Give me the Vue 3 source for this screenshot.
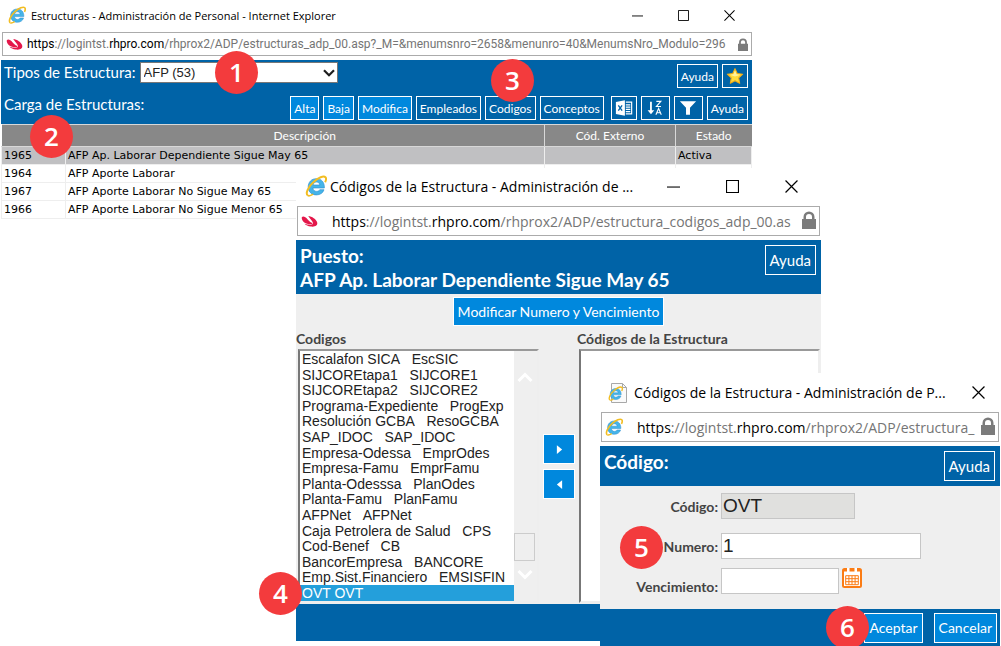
<script setup>
import { ref } from 'vue'

const tipo = ref('AFP (53)')
const codigo = ref('OVT')
const numero = ref('1')
const vencimiento = ref('')
const elegido = ref('OVT OVT')

const filas = [
  { id: '1965', desc: 'AFP Ap. Laborar Dependiente Sigue May 65', estado: 'Activa', activa: true },
  { id: '1964', desc: 'AFP Aporte Laborar', estado: '' },
  { id: '1967', desc: 'AFP Aporte Laborar No Sigue May 65', estado: '' },
  { id: '1966', desc: 'AFP Aporte Laborar No Sigue Menor 65', estado: '' },
]

const g = '\u00a0\u00a0\u00a0'
const codigos = [
  `Escalafon SICA${g}EscSIC`,
  `SIJCOREtapa1${g}SIJCORE1`,
  `SIJCOREtapa2${g}SIJCORE2`,
  `Programa-Expediente${g}ProgExp`,
  `Resolución GCBA${g}ResoGCBA`,
  `SAP_IDOC${g}SAP_IDOC`,
  `Empresa-Odessa${g}EmprOdes`,
  `Empresa-Famu${g}EmprFamu`,
  `Planta-Odesssa${g}PlanOdes`,
  `Planta-Famu${g}PlanFamu`,
  `AFPNet${g}AFPNet`,
  `Caja Petrolera de Salud${g}CPS`,
  `Cod-Benef${g}CB`,
  `BancorEmpresa${g}BANCORE`,
  `Emp.Sist.Financiero${g}EMSISFIN`,
  'OVT OVT',
]
</script>

<template>
  <svg class="defs" aria-hidden="true">
    <symbol id="ie" viewBox="0 0 20 20">
      <path d="M17.6 11.800H7.200c.1 2 1.500 3.100 3.300 3.100 1.400 0 2.300-.5 2.900-1.500h3.900c-.9 2.900-3.500 4.700-6.900 4.700-4.400 0-7.500-2.900-7.500-7.300S6 3.300 10.400 3.300c4.500 0 7.400 3.200 7.200 8.500zM7.300 9.100h6.200c-.2-1.700-1.400-2.700-3.100-2.700-1.600 0-2.800 1-3.100 2.700z" fill="#45b4e8" stroke="#2d8fd0" stroke-width=".6" />
      <path d="M2.600 18.600c-2.500-1.600.2-8 5.200-12.300C12.200 2.300 17 .4 18.600 2c.9.900.6 2.700-.3 4.600" fill="none" stroke="#f2bd22" stroke-width="1.800" />
      <path d="M2.600 18.700c1.200.6 3-.1 4.800-1.300" fill="none" stroke="#f2bd22" stroke-width="1.500" />
    </symbol>
    <symbol id="rh" viewBox="0 0 18 14">
      <path d="M.6 2.600C1.800.8 4.600 1.800 6.800 4.600c1.300 1.700 2.800 3 5 3.900.8.900-.3 1.500-1.600 1.500C5 10 .6 6.800.6 2.600z" fill="#e4174a" />
      <path d="M7.600 1.200c4 .4 8.800 3.500 9.700 7 .8 3.400-2.700 5-6.800 4.300-3-.5-5.600-1.700-6.900-3.200 3.600 1.400 8 1.700 9 .1C13.300 7.500 9.600 4.300 7.600 1.200z" fill="#e4174a" />
    </symbol>
    <symbol id="lock" viewBox="0 0 14 18">
      <path d="M0 8h1.500V6a5.500 5.500 0 0 1 11 0v2H14v10H0zM4 8h6V6a3 3 0 0 0-6 0z" fill="#7b7b7b" />
    </symbol>
    <symbol id="min" viewBox="0 0 12 12"><path d="M0 6.500h12" stroke="#000" /></symbol>
    <symbol id="max" viewBox="0 0 12 12"><path d="M.5.5h11v11H.5z" fill="none" stroke="#000" /></symbol>
    <symbol id="close" viewBox="0 0 12 12"><path d="M.5.5l11 11M11.500.5l-11 11" stroke="#000" stroke-width="1.100" /></symbol>
  </svg>

  <main class="desk">
    <section class="win main">
      <header class="title">
        <svg class="i17"><use href="#ie" /></svg>
        <h1>Estructuras - Administración de Personal - Internet Explorer</h1>
        <button class="wb" aria-label="Minimizar"><svg><use href="#min" /></svg></button>
        <button class="wb" aria-label="Maximizar"><svg><use href="#max" /></svg></button>
        <button class="wb" aria-label="Cerrar"><svg><use href="#close" /></svg></button>
      </header>
      <div class="addr">
        <svg class="rh"><use href="#rh" /></svg>
        <span class="url"><b>https</b>://logintst.<b>rhpro.com</b>/rhprox2/ADP/estructuras_adp_00.asp?_M=&amp;menumsnro=2658&amp;menunro=40&amp;MenumsNro_Modulo=296</span>
        <svg class="lock"><use href="#lock" /></svg>
      </div>
      <div class="blue bars">
        <div class="row">
          <label for="tipo">Tipos de Estructura:</label>
          <span class="combo">
            <select id="tipo" v-model="tipo"><option>AFP (53)</option></select>
            <svg class="chev" viewBox="0 0 12 8"><path d="M1 1.200l5 5 5-5" fill="none" stroke="#1e1e1e" stroke-width="2.200" /></svg>
          </span>
          <span class="fill"></span>
          <button class="btn">Ayuda</button>
          <button class="btn ico" aria-label="Favorito">
            <svg viewBox="0 0 20 20"><path d="M10 1.800l2.500 5.500 6 .7-4.400 4.100 1.100 6-5.200-2.900-5.200 2.900 1.100-6L1.500 8l6-.7z" fill="#ffdc3c" stroke="#f3ac16" stroke-width="1.200" stroke-linejoin="round" /><path d="M10 4l1.700 4 4.300.6-6 2-5.500-2L8.300 8z" fill="#fff3a0" /></svg>
          </button>
        </div>
        <div class="row second">
          <span>Carga de Estructuras:</span>
          <span class="fill"></span>
          <button class="btn light">Alta</button>
          <button class="btn light">Baja</button>
          <button class="btn light">Modifica</button>
          <button class="btn">Empleados</button>
          <button class="btn">Codigos</button>
          <button class="btn last">Conceptos</button>
          <button class="btn ico" aria-label="Excel">
            <svg viewBox="0 0 20 20"><path d="M1 3.200l10-1.700v17L1 16.800z" fill="#fff" /><path d="M3.700 7l4.200 6M7.900 7l-4.200 6" stroke="#0063a7" stroke-width="1.500" /><path d="M12 3.500h6.500v13H12" fill="none" stroke="#fff" stroke-width="1.300" /><path d="M12 6.500h5M12 9h5M12 11.500h5M12 14h5" stroke="#fff" stroke-width="1.300" /></svg>
          </button>
          <button class="btn ico wide" aria-label="Ordenar">
            <svg viewBox="0 0 20 20"><path d="M5.500 3v12" stroke="#fff" stroke-width="2" /><path d="M1.800 12.500h7.400L5.500 17z" fill="#fff" /><path d="M11.500 2.600h5l-5 5.800h5.200M11 17.500l3-7 3 7M12 15.300h4" fill="none" stroke="#fff" stroke-width="1.200" /></svg>
          </button>
          <button class="btn ico wide" aria-label="Filtrar">
            <svg viewBox="0 0 20 20"><path d="M1 2.500h18l-6.800 7.300V17.500H7.800V9.800z" fill="#fff" /></svg>
          </button>
          <button class="btn">Ayuda</button>
        </div>
      </div>
      <table class="grid">
        <colgroup><col class="c-id" /><col /><col class="c-ext" /><col class="c-est" /></colgroup>
        <thead>
          <tr><th class="nob"></th><th class="nob">Descripción</th><th>Cód. Externo</th><th>Estado</th></tr>
        </thead>
        <tbody>
          <tr v-for="f in filas" :key="f.id" :class="{ on: f.activa }">
            <td>{{ f.id }}</td><td>{{ f.desc }}</td><td></td><td>{{ f.estado }}</td>
          </tr>
        </tbody>
      </table>
      <span class="badge b1">1</span>
      <span class="badge b2">2</span>
      <span class="badge b3">3</span>
    </section>

    <section class="win codes big">
      <header class="title">
        <svg class="i21"><use href="#ie" /></svg>
        <h2>Códigos de la Estructura - Administración de ...</h2>
        <button class="wb" aria-label="Minimizar"><svg><use href="#min" /></svg></button>
        <button class="wb" aria-label="Maximizar"><svg><use href="#max" /></svg></button>
        <button class="wb" aria-label="Cerrar"><svg><use href="#close" /></svg></button>
      </header>
      <div class="addr">
        <svg class="rh"><use href="#rh" /></svg>
        <span class="url"><b>https</b>://logintst.<b>rhpro.com</b>/rhprox2/ADP/estructura_codigos_adp_00.as</span>
        <svg class="lock"><use href="#lock" /></svg>
      </div>
      <div class="blue head">
        <h3>Puesto:<br />AFP Ap. Laborar Dependiente Sigue May 65</h3>
        <button class="btn">Ayuda</button>
      </div>
      <div class="body">
        <button class="modify">Modificar Numero y Vencimiento</button>
        <div class="lists">
          <div class="col left">
            <label for="lista">Codigos</label>
            <div class="box">
              <select id="lista" v-model="elegido" size="16">
                <option v-for="c in codigos" :key="c" :value="c">{{ c }}</option>
              </select>
              <div class="scroll" aria-hidden="true">
                <svg viewBox="0 0 16 12"><path d="M1.500 10L8 3.500l6.500 6.500" /></svg>
                <span class="thumb"></span>
                <svg viewBox="0 0 16 12"><path d="M1.500 2L8 8.500 14.500 2" /></svg>
              </div>
            </div>
          </div>
          <div class="moves">
            <button aria-label="Agregar"><svg viewBox="0 0 8 12"><path d="M1 1l6 5-6 5z" /></svg></button>
            <button aria-label="Quitar"><svg viewBox="0 0 8 12"><path d="M7 1L1 6l6 5z" /></svg></button>
          </div>
          <div class="col right">
            <label for="destino">Códigos de la Estructura</label>
            <div class="box"><select id="destino" size="16"></select></div>
          </div>
        </div>
      </div>
      <div class="blue foot"></div>
      <span class="badge b4">4</span>
    </section>

    <section class="win code big">
      <header class="title">
        <svg class="page" viewBox="0 0 20 20"><path d="M3.500.5h11l4 4v15h-15z" fill="#fafafa" stroke="#a8a8a8" /><path d="M14.500.5v4h4" fill="none" stroke="#a8a8a8" /><use href="#ie" x="0" y="3" width="15" height="15" /></svg>
        <h2>Códigos de la Estructura - Administración de P...</h2>
        <button class="wb" aria-label="Cerrar"><svg><use href="#close" /></svg></button>
      </header>
      <div class="addr">
        <svg class="i17"><use href="#ie" /></svg>
        <span class="url"><b>https</b>://logintst.<b>rhpro.com</b>/rhprox2/ADP/estructura_</span>
        <svg class="lock"><use href="#lock" /></svg>
      </div>
      <div class="blue head">
        <h3>Código:</h3>
        <button class="btn">Ayuda</button>
      </div>
      <form class="form" @submit.prevent>
        <label for="cod">Código:</label>
        <input id="cod" v-model="codigo" class="w-cod" readonly />
        <label for="num">Numero:</label>
        <input id="num" v-model="numero" class="w-num" />
        <label for="ven">Vencimiento:</label>
        <span class="date">
          <input id="ven" v-model="vencimiento" class="w-ven" />
          <button type="button" class="cal" aria-label="Calendario">
            <svg viewBox="0 0 20 20"><rect width="20" height="20" rx="2.500" fill="#fb7c14" /><path d="M2 3.500h16V18H2z" fill="#fff" /><path d="M5 0h2.500v5H5zM12.500 0H15v5h-2.500z" fill="#fff" /><path d="M3.700 7.700h12.600v9H3.700zM3.700 10.700h12.600M3.700 13.700h12.600M6.900 7.700v9M10 7.700v9M13.100 7.700v9" fill="none" stroke="#fb7c14" /></svg>
          </button>
        </span>
      </form>
      <div class="blue foot">
        <button class="btn light">Aceptar</button>
        <button class="btn light">Cancelar</button>
      </div>
      <span class="badge b5">5</span>
      <span class="badge b6">6</span>
    </section>
  </main>
</template>

<style>
body { margin: 0; background: #fff; }
</style>

<style scoped>
.defs { position: absolute; width: 0; height: 0; }
.desk {
  position: relative;
  height: 100vh;
  overflow: hidden;
  background: #fff;
  font-family: Lato, "Open Sans", sans-serif;
  font-size: 15px;
}
.desk * { box-sizing: border-box; }
h1, h2, h3 { margin: 0; }
button { font-family: inherit; cursor: pointer; padding: 0; }
svg { display: block; flex: none; }

.win { position: absolute; background: #fff; }
.main { left: 1px; right: 249px; top: 0; }
.codes { left: 296px; right: 180px; top: 168px; }
.code { left: 600px; right: 1px; top: 373px; }

.title { display: flex; align-items: center; height: 32px; padding: 0 0 2px 7px; }
.title h1, .title h2 {
  flex: 1;
  min-width: 0;
  overflow: hidden;
  white-space: nowrap;
  font-family: "Open Sans", sans-serif;
  font-weight: 400;
  color: #000;
}
.title h1 { font-size: 11px; margin-left: 5px; }
.title h2 { font-size: 14px; margin-left: 3px; }
.i17 { width: 18px; height: 18px; }
.i21 { width: 22px; height: 22px; }
.wb { width: 46px; height: 30px; border: 0; background: none; display: grid; place-items: center; flex: none; }
.wb svg { width: 11px; height: 11px; }

.addr {
  display: flex;
  align-items: center;
  height: 24px;
  margin: 0 0 4px 1px;
  padding: 0 3px;
  border: 1px solid #ababab;
  font-family: Roboto, "Open Sans", sans-serif;
  font-size: 12px;
  color: #757575;
}
.addr b { font-weight: 400; color: #000; }
.url { flex: 1; min-width: 0; overflow: hidden; white-space: nowrap; margin: 0 6px 0 4px; }
.rh { width: 17px; height: 13px; }
.lock { width: 10px; height: 13px; }

.blue { background: #0063a7; color: #fff; }
.bars { height: 64px; padding: 0 4px 0 3px; }
.row { display: flex; align-items: center; gap: 4px; height: 32px; }
.row label, .second > span, .combo { padding-bottom: 8px; }
.fill { flex: 1; }
.combo { position: relative; width: 198px; }
.combo select {
  appearance: none;
  display: block;
  width: 100%;
  height: 21px;
  padding: 0 3px;
  border: 1px solid #777;
  border-radius: 0;
  background: #fff;
  color: #222;
  font: 13px "Liberation Sans", sans-serif;
}
.chev { position: absolute; right: 3px; top: 7px; width: 12px; height: 8px; pointer-events: none; }
.btn {
  height: 24px;
  padding: 0 3px;
  border: 1px solid #fff;
  background: #0063a7;
  color: #fff;
  font-size: 12px;
  white-space: nowrap;
}
.light { background: #0088dd; }
.ico { width: 26px; display: grid; place-items: center; padding: 0; }
.ico svg { width: 18px; height: 18px; }
.wide { width: 29px; }
.last { margin-right: 3px; }

.grid { width: 100%; border-collapse: collapse; table-layout: fixed; font-family: "DejaVu Sans", sans-serif; font-size: 11px; color: #000; }
.c-id { width: 64px; }
.c-ext { width: 131px; }
.c-est { width: 76px; }
.grid th { height: 22px; padding: 0; background: #888; color: #fff; font: 12px Lato, sans-serif; border: 1px solid #d8d8d8; border-width: 1px 0 1px 1px; }
.grid .nob { border-left: 0; }
.grid td { height: 18px; padding: 0 2px; border: 1px solid #eee; border-top: 0; white-space: nowrap; line-height: 17px; }
.grid .on td { background: #c0c0c2; }

.badge {
  position: absolute;
  width: 43px;
  height: 43px;
  border-radius: 50%;
  background: #f33b3d;
  color: #fff;
  font: 600 26px/42px "Open Sans", sans-serif;
  text-align: center;
}
.b1 { left: 214px; top: 51px; }
.b2 { left: 29px; top: 115px; }
.b3 { right: 218px; top: 59px; }
.b4 { left: -37px; top: 404px; }
.b5 { left: 20px; top: 153px; }
.b6 { right: 131px; top: 233px; }

.big .title { height: 38px; padding-left: 9px; }
.big .wb { width: 59px; }
.big .wb svg { width: 13px; height: 13px; }
.big .addr { height: 30px; margin: 0 1px 4px; font-family: "Open Sans", sans-serif; font-size: 14px; }
.big .url { margin: 0 4px 0 14px; }
.big .lock { width: 14px; height: 18px; margin-bottom: 2px; }
.big .btn { height: 30px; padding: 0 4px; font-size: 15px; }
.head { display: flex; justify-content: space-between; align-items: flex-start; padding: 5px 5px 1px 4px; }
.head h3 { font-size: 19px; line-height: 24px; font-weight: 700; }
.codes .head { height: 54px; }
.big .head h3 { margin-top: -1px; }

.body { background: #efefef; padding: 3px 0 1px; }
.modify { display: block; height: 29px; margin: 0 auto; padding: 0 4px; border: 1px solid #fff; background: #0088dd; color: #fff; font-size: 14px; }
.lists { display: flex; margin-top: 3px; }
.col label { display: block; font-size: 14px; line-height: 20px; font-weight: 700; color: #444; }
.left { width: 243px; }
.left .box { margin-left: 2px; }
.right { flex: 1; min-width: 0; margin-right: 1px; }
.right label { margin-left: -2px; }
.box { display: flex; height: 254px; background: #fff; border: 2px solid #999; border-left-color: #777; border-right-color: #eee; border-bottom-color: #eee; }
.box select { flex: 1; min-width: 0; height: 100%; appearance: none; border: 0; outline: 0; padding: 0; overflow: hidden; background: #fff; border-radius: 0; font: 14px "Liberation Sans", sans-serif; color: #222; }
.box option { height: 16px; min-height: 0; line-height: 15px; padding: 0 2px; }
.box option:nth-child(5n+2), .box option:nth-child(5n+4) { height: 15px; }
.box option:checked { background: linear-gradient(#249fdb, #249fdb); -webkit-text-fill-color: #fff; }
.scroll { width: 23px; background: #efefef; display: flex; flex-direction: column; padding: 20px 2px 20px 0; }
.scroll svg { width: 16px; height: 12px; margin: 0 auto; fill: none; stroke: #fff; stroke-width: 3; }
.thumb { height: 28px; margin: auto 0 8px; border: 1px solid #ccc; }
.moves { width: 40px; padding-top: 105px; display: flex; flex-direction: column; align-items: center; gap: 5px; }
.moves button { width: 32px; height: 30px; border: 1px solid #fff; background: #0088dd; display: grid; place-items: center; }
.moves svg { width: 7px; height: 11px; fill: #fff; }
.foot { height: 37px; }

.page { width: 20px; height: 20px; }
.code .title { height: 39px; padding: 0 0 0 8px; }
.code .title h2 { margin-left: 6px; }
.code .title .wb { width: 44px; }
.code .head { height: 40px; }
.form { display: grid; grid-template-columns: 118px 1fr; grid-auto-rows: 40px; align-items: center; column-gap: 3px; padding: 0 0 3px; background: #efefef; }
.form label { text-align: right; font-size: 14px; font-weight: 700; color: #444; }
.form input { height: 26px; padding: 0 1px; border: 1px solid #c6c6c6; border-radius: 0; background: #fff; color: #222; font: 19px "Liberation Sans", sans-serif; }
.form .w-cod { width: 134px; background: #e0e0de; }
.w-num { width: 200px; }
.w-ven { width: 118px; }
.date { display: flex; align-self: start; align-items: flex-start; gap: 3px; padding-top: 2px; }
.cal { border: 0; background: none; }
.cal svg { width: 20px; height: 20px; }
.code .foot { display: flex; justify-content: flex-end; align-items: center; gap: 11px; padding-right: 3px; }
.foot .btn { font-size: 14px; }
</style>
